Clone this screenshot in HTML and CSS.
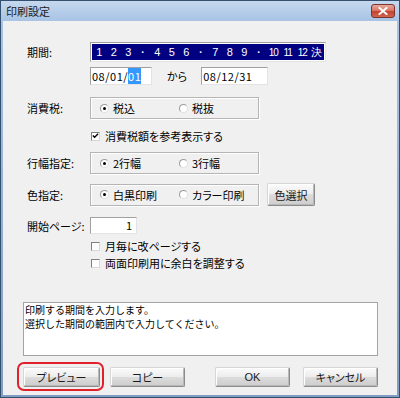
FILE: index.html
```html
<!DOCTYPE html>
<html lang="ja">
  <head>
    <meta charset="UTF-8" />
    <meta name="viewport" content="width=device-width, initial-scale=1.0" />
    <title>印刷設定</title>
    <link rel="stylesheet" href="styles.css">
  </head>
  <body>
    <div class="window">
      <div class="titlebar">
        <span class="title">印刷設定</span>
        <span class="close">
          <svg width="10" height="8" viewBox="0 0 10 8">
            <path d="M1.5 1 L8.5 7 M8.5 1 L1.5 7" stroke="#fff" stroke-width="2" stroke-linecap="square" />
          </svg>
        </span>
      </div>

      <div class="client">
        <div class="row row-period">
          <span class="label">期間:</span>
          <div class="months">
            <div class="months-inner">
              <span>1</span><span>2</span><span>3</span><span>・</span>
              <span>4</span><span>5</span><span>6</span><span>・</span>
              <span>7</span><span>8</span><span>9</span><span>・</span>
              <span class="two">10</span><span class="two">11</span><span class="two">12</span><span>決</span>
            </div>
          </div>
        </div>

        <div class="row row-dates">
          <span class="field date date-from">08/01/<span class="sel">01</span></span>
          <span class="kara">から</span>
          <span class="field date date-to">08/12/31</span>
        </div>

        <div class="row row-tax">
          <span class="label">消費税:</span>
          <div class="group">
            <span class="opt"><span class="radio checked"></span>税込</span>
            <span class="opt"><span class="radio"></span>税抜</span>
          </div>
        </div>

        <div class="row row-check first-check">
          <span class="check checked">
            <svg width="8" height="8" viewBox="0 0 8 8">
              <path d="M1 3.5 L3 5.5 L7 1.5" stroke="#000" stroke-width="1.6" fill="none" />
            </svg>
          </span>
          消費税額を参考表示する
        </div>

        <div class="row row-lines">
          <span class="label">行幅指定:</span>
          <div class="group">
            <span class="opt"><span class="radio checked"></span>2行幅</span>
            <span class="opt"><span class="radio"></span>3行幅</span>
          </div>
        </div>

        <div class="row row-color">
          <span class="label">色指定:</span>
          <div class="group">
            <span class="opt"><span class="radio checked"></span>白黒印刷</span>
            <span class="opt"><span class="radio"></span>カラー印刷</span>
          </div>
          <span class="btn btn-color">色選択</span>
        </div>

        <div class="row row-start">
          <span class="label">開始ページ:</span>
          <span class="field page">1</span>
        </div>

        <div class="row row-check check-monthly">
          <span class="check"></span>
          月毎に改ページする
        </div>

        <div class="row row-check check-duplex">
          <span class="check"></span>
          両面印刷用に余白を調整する
        </div>

        <div class="message">
          <p>印刷する期間を入力します。</p>
          <p>選択した期間の範囲内で入力してください。</p>
        </div>

        <div class="buttons">
          <span class="marked"><span class="btn btn-preview">プレビュー</span></span>
          <span class="btn btn-copy">コピー</span>
          <span class="btn btn-ok">OK</span>
          <span class="btn btn-cancel">キャンセル</span>
        </div>
      </div>
    </div>
  </body>
</html>
```

FILE: styles.css
```css
* {
  box-sizing: border-box;
}
body {
  margin: 0;
  background: #fff;
  font-family: "Noto Sans CJK JP", sans-serif;
  font-size: 11px;
  font-feature-settings: "palt";
  color: #000;
}
.window {
  width: 400px;
  height: 398px;
  border: 1px solid #34506f;
  background: linear-gradient(#c6d8ee, #a8c3e4 20px, #7f9dc2);
  display: flex;
  flex-direction: column;
}
.titlebar {
  height: 20px;
  display: flex;
  align-items: center;
  justify-content: space-between;
  padding: 0 4px 0 5px;
}
.title {
  color: #1a1a1a;
  line-height: 1;
}
.close {
  width: 24px;
  height: 14px;
  border: 1px solid #7c352b;
  border-radius: 3px;
  background: linear-gradient(#eaa99b, #d7725e 50%, #c2412e 50%, #d2644d);
  display: flex;
  align-items: center;
  justify-content: center;
}
.client {
  flex: 1;
  margin: 0 2px 2px;
  background: #f0f0f0;
  padding: 0 19px 0 20px;
  display: flex;
  flex-direction: column;
}
.row {
  display: flex;
  align-items: center;
}
.label {
  width: 67px;
  padding-left: 4px;
  flex-shrink: 0;
}

/* period selector */
.row-period {
  margin-top: 21px;
  height: 20px;
}
.months {
  width: 236px;
  height: 20px;
  border: 1px solid #a0a0a0;
  border-right-color: #e3e3e3;
  border-bottom-color: #e3e3e3;
  padding: 1px;
  background: #fff;
}
.months-inner {
  height: 100%;
  background: #000080;
  color: #fff;
  display: grid;
  grid-template-columns: repeat(16, 1fr);
  align-items: center;
  font-family: "Liberation Sans", sans-serif;
  font-size: 11px;
}
.months-inner span {
  text-align: center;
}
.months-inner .two {
  letter-spacing: -1px;
  font-size: 10px;
}

.field {
  background: #fff;
  border: 1px solid #a0a0a0;
  border-right-color: #e3e3e3;
  border-bottom-color: #e3e3e3;
  height: 18px;
  line-height: 16px;
  padding-left: 1px;
}
.row-dates {
  margin-top: 5px;
  height: 18px;
  padding-left: 67px;
}
.date {
  letter-spacing: 0.5px;
}
.date-from {
  width: 62px;
}
.date-to {
  width: 67px;
}
.sel {
  background: #3399ff;
  color: #fff;
}
.kara {
  margin: 0 14px 0 15px;
}

/* option groups */
.row-tax {
  margin-top: 12px;
  height: 22px;
}
.row-lines {
  margin-top: 9px;
  height: 22px;
}
.row-color {
  margin-top: 9px;
  height: 23px;
}
.group {
  width: 169px;
  height: 22px;
  border: 1px solid #b5b5b5;
  box-shadow: inset 1px 1px 0 #fff, 1px 1px 0 #fff;
  display: flex;
  align-items: center;
  padding-left: 9px;
}
.opt {
  width: 80px;
  display: flex;
  align-items: center;
}
.radio {
  width: 9px;
  height: 9px;
  border-radius: 50%;
  border: 1px solid #9a9a9a;
  border-right-color: #e0e0e0;
  border-bottom-color: #e0e0e0;
  background: #fff;
  margin-right: 4px;
  display: flex;
  align-items: center;
  justify-content: center;
}
.radio.checked::after {
  content: "";
  width: 3px;
  height: 3px;
  border-radius: 50%;
  background: #000;
}

.row-check {
  height: 14px;
  padding-left: 68px;
}
.first-check {
  margin-top: 10px;
}
.check-monthly {
  margin-top: 5px;
}
.check-duplex {
  margin-top: 3px;
}
.check {
  width: 9px;
  height: 9px;
  border: 1px solid #808080;
  border-right-color: #d8d8d8;
  border-bottom-color: #d8d8d8;
  background: #fff;
  margin-right: 5px;
  display: flex;
  align-items: center;
  justify-content: center;
}

.row-start {
  margin-top: 11px;
  height: 17px;
}
.page {
  width: 47px;
  height: 17px;
  line-height: 15px;
  text-align: right;
  padding-right: 4px;
}

.message {
  margin-top: 32px;
  width: 355px;
  height: 54px;
  background: #fff;
  border: 1px solid #a3a3a3;
  font-size: 10px;
  font-feature-settings: normal;
  line-height: 14px;
  padding: 0 1px;
}
.message p {
  margin: 0;
}

/* buttons */
.btn {
  height: 20px;
  width: 75px;
  border: 1px solid #8c8c8c;
  border-top-color: #d6d6d6;
  border-left-color: #d6d6d6;
  border-radius: 2px;
  background: linear-gradient(#fbfbfb, #ececec 50%, #dcdcdc 50%, #cdcdcd);
  box-shadow: inset -1px -1px 0 #b8b8b8, inset 1px 1px 0 #fff;
  display: flex;
  align-items: center;
  justify-content: center;
  color: #1a1a1a;
}
.btn-color {
  width: 48px;
  height: 23px;
  margin-left: 8px;
}
.buttons {
  margin-top: 11px;
  height: 20px;
  display: flex;
}
.marked {
  position: relative;
}
.marked::after {
  content: "";
  position: absolute;
  top: -5px;
  left: -6px;
  right: -4px;
  bottom: -4px;
  border: 2px solid #e0212b;
  border-radius: 7px;
}
.btn-preview {
  width: 77px;
}
.btn-copy {
  margin-left: 10px;
}
.btn-ok {
  margin-left: 30px;
  font-family: "Liberation Sans", sans-serif;
}
.btn-cancel {
  margin-left: 13px;
}
```
